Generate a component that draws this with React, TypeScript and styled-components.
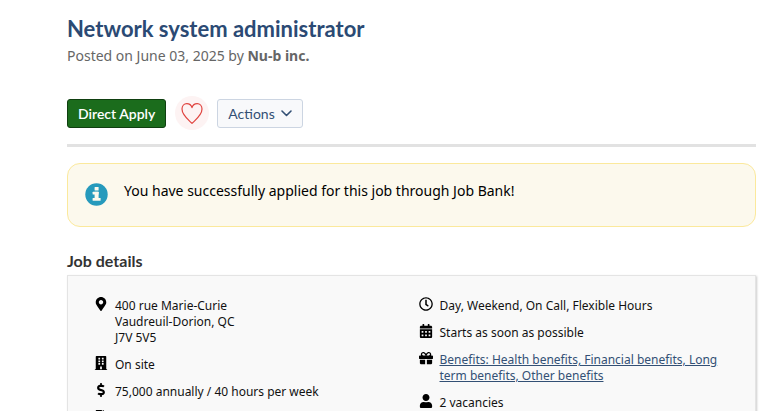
import React from "react";
import styled, { createGlobalStyle } from "styled-components";
import {
  FaBuilding,
  FaCalendarAlt,
  FaDollarSign,
  FaFileAlt,
  FaGift,
  FaMapMarkerAlt,
  FaRegClock,
  FaUser,
} from "react-icons/fa";

const GlobalStyle = createGlobalStyle`
  *, *::before, *::after { box-sizing: border-box; }
  body {
    margin: 0;
    background: #fff;
    color: #111;
    font-family: "Noto Sans", sans-serif;
    font-size: 12px;
  }
`;

const Page = styled.main`
  height: 100vh;
  overflow: hidden;
  padding: 14px 24px 0 67px;
`;

const Title = styled.h1`
  margin: 0;
  color: #2b4a74;
  font-family: Lato, sans-serif;
  font-size: 22px;
  font-weight: 700;
  line-height: 30px;
`;

const Posted = styled.p`
  margin: 2px 0 0;
  color: #666;
  font-size: 14px;
  line-height: 20px;
`;

const Toolbar = styled.div`
  display: flex;
  align-items: center;
  margin-top: 30px;
  padding-bottom: 14px;
  border-bottom: 3px solid #e2e2e2;
`;

const Button = styled.button<{ $primary?: boolean }>`
  display: flex;
  align-items: center;
  gap: 6px;
  height: 29px;
  padding: 0 10px;
  border: 1px solid ${(p) => (p.$primary ? "#0f3f10" : "#ccd5e2")};
  border-radius: 3px;
  background: ${(p) => (p.$primary ? "#1b6c1c" : "#f8f9fb")};
  color: ${(p) => (p.$primary ? "#fff" : "#335075")};
  font-family: Lato, sans-serif;
  font-size: 14px;
  font-weight: ${(p) => (p.$primary ? 600 : 400)};
`;

const FavouriteButton = styled.button`
  display: grid;
  place-items: center;
  width: 34px;
  height: 34px;
  margin: 0 8px 0 9px;
  padding: 0;
  border: 0;
  border-radius: 50%;
  background: #fdf3f3;
`;

const Notice = styled.section`
  display: flex;
  gap: 16px;
  min-height: 64px;
  margin-top: 16px;
  padding: 17px;
  border: 1px solid #fbe99c;
  border-radius: 13px;
  background: #fcf9ed;
  color: #000;
  font-size: 14px;
  line-height: 20px;

  svg {
    flex: none;
    margin-top: 2px;
    color: #269abc;
  }
  p { margin: 0; }
`;

const SectionTitle = styled.h2`
  margin: 24px 0 4px;
  color: #333;
  font-family: Lato, sans-serif;
  font-size: 16px;
  font-weight: 700;
  line-height: 20px;
`;

const Card = styled.div`
  display: grid;
  grid-template-columns: 1fr 1fr;
  padding: 22px 19px;
  border: 1px solid #e4e4e4;
  background: #f9f9f9;
  box-shadow: 1px 1px 2px #ccc;
`;

const List = styled.ul`
  display: flex;
  flex-direction: column;
  gap: 11px;
  margin: 0;
  padding: 0;
  list-style: none;
`;

const Item = styled.li`
  display: grid;
  grid-template-columns: 28px 1fr;
  line-height: 16px;

  svg {
    justify-self: center;
    margin-top: -1px;
    color: #000;
  }
`;

const Text = styled.span`
  max-width: 290px;
`;

const BenefitsLink = styled.a`
  color: #335075;
  text-decoration: underline;
`;

function Row({ icon, children }: { icon: React.ReactNode; children?: React.ReactNode }) {
  return (
    <Item>
      {icon}
      <Text>{children}</Text>
    </Item>
  );
}

export default function App() {
  return (
    <>
      <GlobalStyle />
      <Page>
        <Title>Network system administrator</Title>
        <Posted>
          Posted on June 03, 2025 by <strong>Nu-b inc.</strong>
        </Posted>
        <Toolbar>
          <Button type="button" $primary>Direct Apply</Button>
          <FavouriteButton type="button" aria-label="Add to favourites">
            <svg width="22" height="22" viewBox="0 0 22 22" fill="none" stroke="#e0433f" strokeWidth="1.2" strokeLinejoin="round">
              <path d="M11 21.4C7.5 17.9 1 13.4 1 7.1 1 3.7 3.2 1.6 5.8 1.6 8.3 1.6 10.3 3.2 11 5.6 11.7 3.2 13.7 1.6 16.2 1.6 18.8 1.6 21 3.7 21 7.1 21 13.4 14.5 17.9 11 21.4Z" />
            </svg>
          </FavouriteButton>
          <Button type="button" aria-haspopup="menu">
            Actions
            <svg width="11" height="7" viewBox="0 0 11 7" fill="none" stroke="currentColor" strokeWidth="1.6" strokeLinecap="round" strokeLinejoin="round">
              <path d="M1 1l4.5 4.5L10 1" />
            </svg>
          </Button>
        </Toolbar>
        <Notice role="status">
          <svg width="23" height="23" viewBox="0 0 23 23" aria-hidden="true">
            <circle cx="11.5" cy="11.5" r="11.2" fill="currentColor" />
            <rect x="9.6" y="4" width="4" height="3.4" rx="0.5" fill="#fcf9ed" />
            <rect x="7.6" y="8.8" width="6" height="2.6" rx="0.5" fill="#fcf9ed" />
            <rect x="9.6" y="8.8" width="4" height="8" fill="#fcf9ed" />
            <rect x="7.6" y="15" width="8" height="2.7" rx="0.5" fill="#fcf9ed" />
          </svg>
          <p>You have successfully applied for this job through Job Bank!</p>
        </Notice>
        <SectionTitle>Job details</SectionTitle>
        <Card>
          <List>
            <Row icon={<FaMapMarkerAlt size={14} />}>
              400 rue Marie-Curie
              <br />
              Vaudreuil-Dorion, QC
              <br />
              J7V 5V5
            </Row>
            <Row icon={<FaBuilding size={14} />}>On site</Row>
            <Row icon={<FaDollarSign size={14} />}>75,000 annually / 40 hours per week</Row>
            <Row icon={<FaFileAlt size={14} />} />
          </List>
          <List>
            <Row icon={<FaRegClock size={14} />}>Day, Weekend, On Call, Flexible Hours</Row>
            <Row icon={<FaCalendarAlt size={14} />}>Starts as soon as possible</Row>
            <Row icon={<FaGift size={14} />}>
              <BenefitsLink href="#benefits">
                Benefits: Health benefits, Financial benefits, Long term benefits, Other benefits
              </BenefitsLink>
            </Row>
            <Row icon={<FaUser size={14} />}>2 vacancies</Row>
          </List>
        </Card>
      </Page>
    </>
  );
}
